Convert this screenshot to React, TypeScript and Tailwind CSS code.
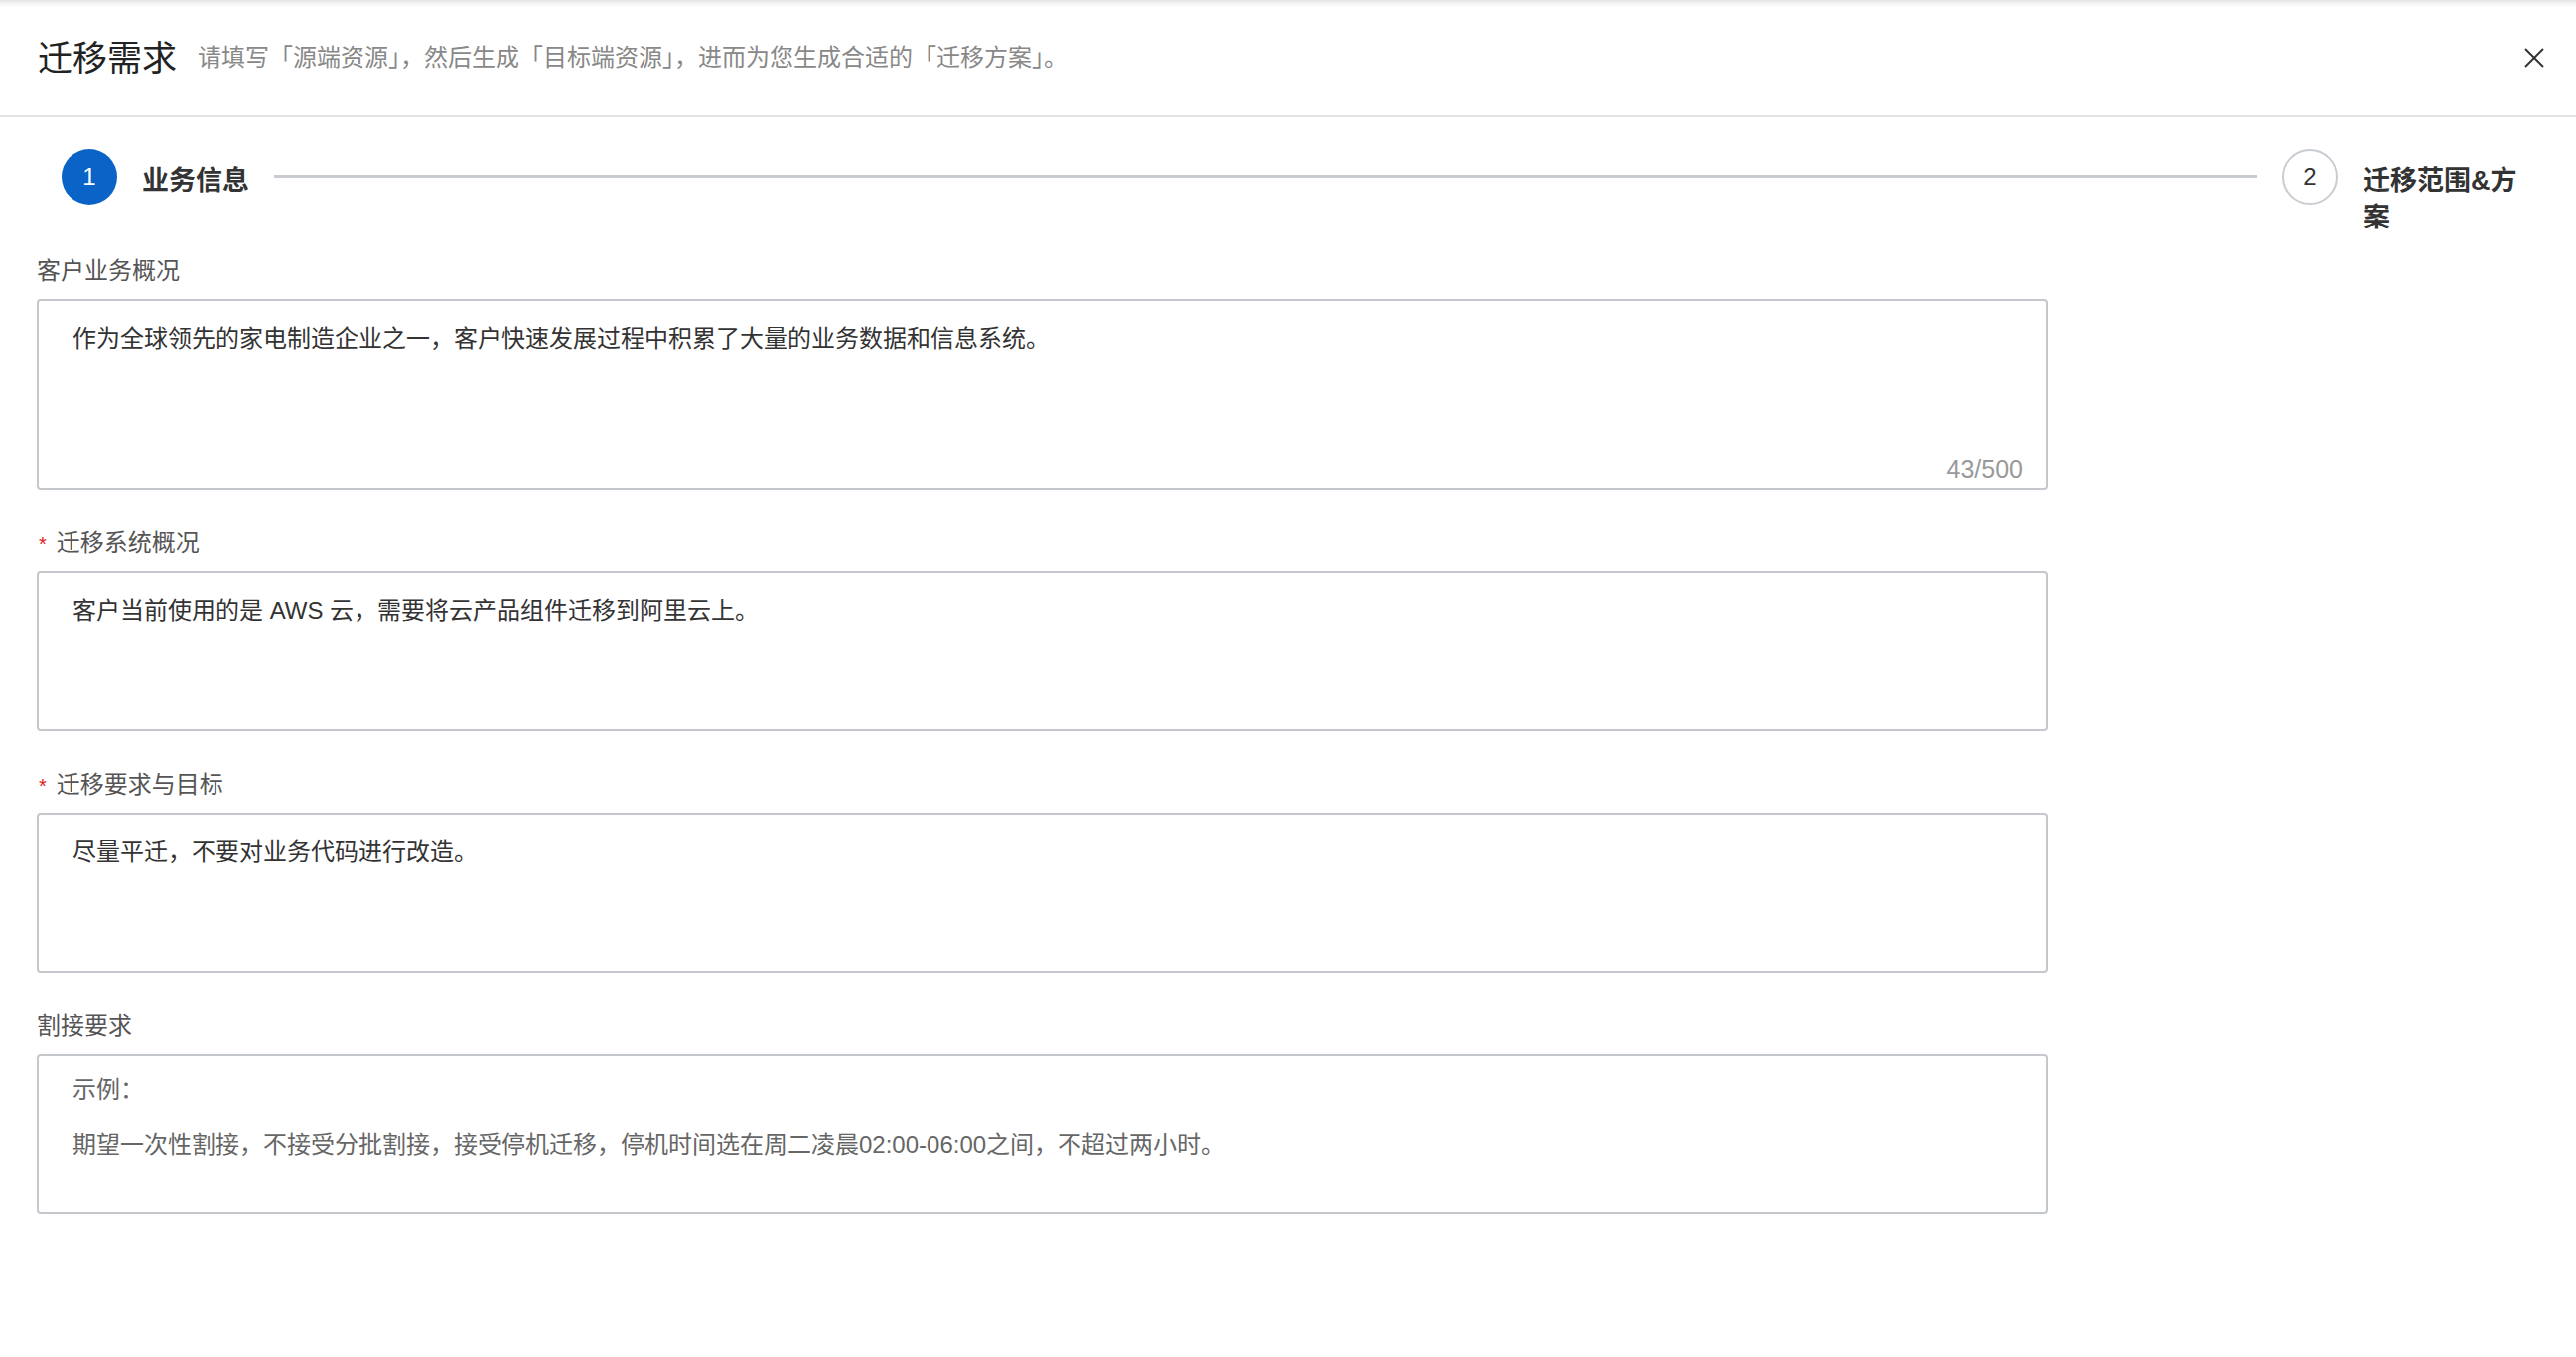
import React from "react";

const fields = [
  {
    label: "客户业务概况",
    required: false,
    text: "作为全球领先的家电制造企业之一，客户快速发展过程中积累了大量的业务数据和信息系统。",
    height: "h-[192px]",
    counter: "43/500",
    muted: false,
  },
  {
    label: "迁移系统概况",
    required: true,
    text: "客户当前使用的是 AWS 云，需要将云产品组件迁移到阿里云上。",
    height: "h-[161px]",
    counter: "",
    muted: false,
  },
  {
    label: "迁移要求与目标",
    required: true,
    text: "尽量平迁，不要对业务代码进行改造。",
    height: "h-[161px]",
    counter: "",
    muted: false,
  },
  {
    label: "割接要求",
    required: false,
    text: "示例：\n\n期望一次性割接，不接受分批割接，接受停机迁移，停机时间选在周二凌晨02:00-06:00之间，不超过两小时。",
    height: "h-[161px]",
    counter: "",
    muted: true,
  },
];

const App = () => {
  return (
    <div className="min-h-screen w-full bg-white font-['Liberation_Sans','Noto_Sans_CJK_SC',sans-serif] text-[#333]">
      <header className="flex h-[118px] items-center justify-between border-b-2 border-[#e3e3e3] pl-[38px] pr-[30px] shadow-[inset_0_7px_6px_-5px_rgba(0,0,0,0.14)]">
        <div className="flex items-center">
          <h1 className="text-[35px] font-normal leading-none text-[#222]">迁移需求</h1>
          <p className="ml-[21px] text-[24px] leading-none text-[#888]">
            请填写「源端资源」，然后生成「目标端资源」，进而为您生成合适的「迁移方案」。
          </p>
        </div>
        <button className="flex h-[24px] w-[24px] items-center justify-center text-[#333]">
          <svg width="22" height="22" viewBox="0 0 22 22" fill="none" stroke="currentColor" strokeWidth="2">
            <line x1="2" y1="2" x2="20" y2="20" />
            <line x1="20" y1="2" x2="2" y2="20" />
          </svg>
        </button>
      </header>

      <div className="mt-[32px] flex h-[106px] items-start pl-[62px] pr-[49px]">
        <div className="flex h-[56px] w-[56px] shrink-0 items-center justify-center rounded-full bg-[#0a64c8] text-[24px] text-white">
          1
        </div>
        <div className="ml-[25px] mt-[14px] text-[27px] font-semibold leading-[37px] text-[#333]">业务信息</div>
        <div className="mx-[25px] mt-[26px] h-[3px] flex-1 bg-[#c8ccd1]" />
        <div className="flex h-[56px] w-[56px] shrink-0 items-center justify-center rounded-full border-2 border-[#c9cdd2] text-[24px] text-[#333]">
          2
        </div>
        <div className="ml-[26px] mt-[14px] w-[165px] text-[27px] font-semibold leading-[37px] text-[#333]">
          迁移范围&amp;方案
        </div>
      </div>

      <div className="w-[2062px] pl-[37px]">
        {fields.map((f, i) => (
          <div key={f.label} className={i === 0 ? "" : "mt-[37px]"}>
            <div className="mb-[11px] flex h-[34px] items-center text-[24px] leading-[34px] text-[#555]">
              {f.required && <span className="ml-[2px] mr-[10px] mt-[2px] text-[20px] text-[#e0201b]">*</span>}
              <span>{f.label}</span>
            </div>
            <div
              className={`flex flex-col justify-between rounded-[4px] border-2 border-[#c4c8cd] bg-white pl-[34px] pr-[23px] ${f.height} ${f.muted ? "pt-[20px]" : "pt-[23px]"}`}
            >
              <div
                className={`whitespace-pre-wrap text-[24px] ${f.muted ? "leading-[28px] text-[#666]" : "leading-[29px] text-[#333]"}`}
              >
                {f.text}
              </div>
              {f.counter && (
                <div className="self-end pb-[7px] text-[25px] leading-[24px] text-[#999]">{f.counter}</div>
              )}
            </div>
          </div>
        ))}
      </div>
    </div>
  );
};

export default App;
